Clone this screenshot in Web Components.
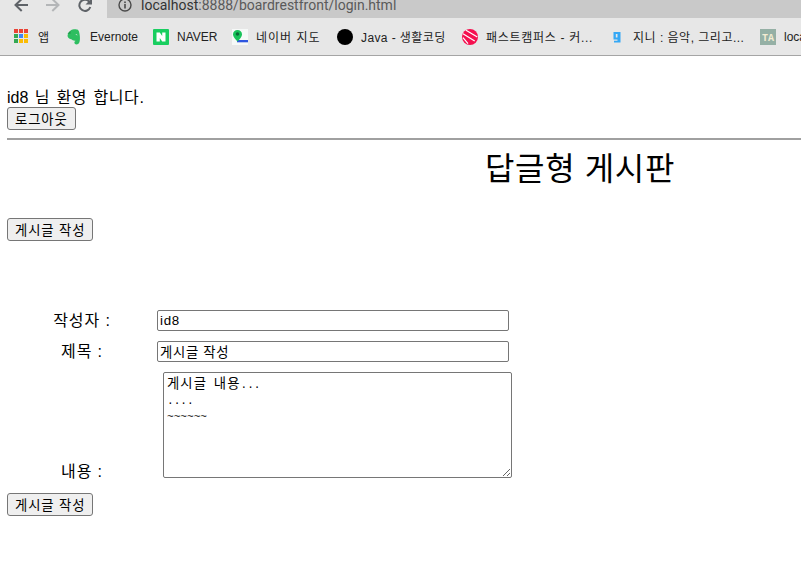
<!DOCTYPE html>
<html lang="ko">
<head>
<meta charset="utf-8">
<title>답글형 게시판</title>
<style>
html, body { margin: 0; height: 100%; overflow: hidden; background: #fff; }
body { font-family: "Liberation Sans", "Noto Sans CJK KR", sans-serif; }
</style>
</head>
<body>
<browser-toolbar url="localhost:8888/boardrestfront/login.html"></browser-toolbar>
<bookmark-bar>
	<bookmark-item label="앱" width="52"><svg viewBox="0 0 16 16" width="16" height="16"><rect x="0" y="0" width="4" height="4" fill="#ea4335"/><rect x="5" y="0" width="4" height="4" fill="#ea4335"/><rect x="10" y="0" width="4" height="4" fill="#ea4335"/><rect x="0" y="5" width="4" height="4" fill="#34a853"/><rect x="5" y="5" width="4" height="4" fill="#4285f4"/><rect x="10" y="5" width="4" height="4" fill="#fbbc05"/><rect x="0" y="10" width="4" height="4" fill="#34a853"/><rect x="5" y="10" width="4" height="4" fill="#fbbc05"/><rect x="10" y="10" width="4" height="4" fill="#fbbc05"/></svg></bookmark-item>
	<bookmark-item label="Evernote" width="87"><svg viewBox="0 0 16 16" width="16" height="16"><path d="M2 4.500 5 1.200C6.500.2 10.500 0 12 1c1 .7 1.300 2.500 1.700 5 .4 3 .3 5.500-.4 7.500-.6 1.800-3 2.500-4.300 1.500-1.100-.9-.8-2.800.9-2.900-1.200-.5-3.100-.3-4.100-1.500C3.900 9.700 2 9.500 1.500 7z" fill="#2dbe60"/><path d="M1.500 4.800h3V1.600z" fill="#1f9a4b"/><path d="M9.500 5.500c1-.4 1.800 0 2 .9-.8-.2-1.400-.3-2-.9z" fill="#e6e6e6"/></svg></bookmark-item>
	<bookmark-item label="NAVER" width="79"><svg viewBox="0 0 16 16" width="16" height="16"><rect width="16" height="16" rx="1" fill="#19ce60"/><path d="M3.500 3.500h3.300l2.400 3.500V3.500h3.300v9H9.200L6.800 9v3.500H3.500z" fill="#fff"/></svg></bookmark-item>
	<bookmark-item label="네이버 지도" width="105" spacing="1"><svg viewBox="0 0 16 16" width="16" height="16"><rect width="16" height="16" fill="#f6f9f8"/><rect x="5" y="11" width="11" height="2" fill="#2f56e0"/><rect x="5" y="13" width="11" height="1" fill="#b9c7f0"/><path d="M5.500 1C3 1 1 2.800 1 5.200c0 3 4.500 7.300 4.500 7.300S10 8.200 10 5.200C10 2.800 8 1 5.500 1z" fill="#19c35a"/><circle cx="5.500" cy="5" r="1.800" fill="#0b6b38"/></svg></bookmark-item>
	<bookmark-item label="Java - 생활코딩" width="125" spacing=".4"><svg viewBox="0 0 16 16" width="16" height="16"><circle cx="8" cy="8" r="8" fill="#000"/></svg></bookmark-item>
	<bookmark-item label="패스트캠퍼스 - 커..." width="147" spacing=".7"><svg viewBox="0 0 16 16" width="16" height="16"><circle cx="8" cy="8" r="8" fill="#f5104f"/><path d="M4 1.300 15.300 8M1 4.700 12.700 12M1 8.700l5 6" stroke="#fff" stroke-width="1.200" fill="none"/></svg></bookmark-item>
	<bookmark-item label="지니 : 음악, 그리고..." width="151" spacing=".5"><svg viewBox="0 0 16 16" width="16" height="16"><path d="M4.500 3h7v10.500H5V11.800h3.500v-1.300h-4zM6.800 5v3.500h1.700V5z" fill="#35a8f5"/></svg></bookmark-item>
	<bookmark-item label="localhost" width="60"><svg viewBox="0 0 16 16" width="16" height="16"><rect width="16" height="16" fill="#95b0a5"/><text x="8" y="12" text-anchor="middle" font-family="Liberation Mono" font-weight="700" font-size="10" fill="#f3ecd2">TA</text></svg></bookmark-item>
</bookmark-bar>
<board-page>
	<welcome-box name="id8"></welcome-box>
	<board-title>답글형 게시판</board-title>
	<write-form author="id8" subject="게시글 작성"></write-form>
</board-page>

<script>
class BrowserToolbar extends HTMLElement {
	constructor() {
		super();
		this.attachShadow({ mode: "open" });
		this.shadowRoot.innerHTML = `<style>
:host { display: block; height: 18px; overflow: hidden; background: #e7e7e7; }
#row { display: flex; align-items: center; height: 36px; margin-top: -13px; padding-left: 14px; }
svg { display: block; flex: none; }
#nav { display: flex; gap: 18px; }
#pill {
	flex: 1;
	height: 62px;
	margin: 0 -40px 0 15px;
	padding-left: 11px;
	display: flex;
	align-items: center;
	gap: 9px;
	background: #c9c9c9;
	border-radius: 16px;
	font: 14px "Roboto", "Liberation Sans", sans-serif;
	color: #5a5a5a;
}
#pill b { font-weight: 400; color: #333; }
</style>
<div id="row">
	<div id="nav">
		<svg viewBox="0 0 14 14" width="14" height="14"><path d="M14 7H2M7.700 1 1.500 7l6.200 6" fill="none" stroke="#5f6368" stroke-width="2"/></svg>
		<svg viewBox="0 0 14 14" width="14" height="14"><path d="M0 7h12M6.300 1l6.200 6-6.200 6" fill="none" stroke="#b4b6b8" stroke-width="2"/></svg>
		<svg viewBox="0 0 14 14" width="14" height="14"><path d="M12.300 9a5.600 5.600 0 1 1-1.200-5.500L13 5.500" fill="none" stroke="#5f6368" stroke-width="2"/><path d="M14 0v6.500H7.500z" fill="#5f6368"/></svg>
	</div>
	<div id="pill">
		<svg viewBox="0 0 14 14" width="14" height="14"><circle cx="7" cy="7" r="6" fill="none" stroke="#4a4a4a" stroke-width="1.400"/><rect x="6.200" y="6" width="1.600" height="4.500" fill="#4a4a4a"/><rect x="6.200" y="3.500" width="1.600" height="1.600" fill="#4a4a4a"/></svg>
		<span></span>
	</div>
</div>`;
	}
	connectedCallback() {
		let url = this.getAttribute("url");
		let cut = url.indexOf(":");
		this.shadowRoot.querySelector("#pill span").innerHTML = `<b>${url.slice(0, cut)}</b>${url.slice(cut)}`;
	}
}
customElements.define("browser-toolbar", BrowserToolbar);

class BookmarkBar extends HTMLElement {
	constructor() {
		super();
		this.attachShadow({ mode: "open" });
		this.shadowRoot.innerHTML = `<style>
:host {
	display: flex;
	align-items: center;
	height: 37px;
	padding-left: 14px;
	overflow: hidden;
	background: #e7e7e7;
	border-bottom: 1px solid #a5a5a5;
	font: 12px "Liberation Sans", "Noto Sans CJK KR", sans-serif;
	color: #222;
}
</style><slot></slot>`;
	}
}
customElements.define("bookmark-bar", BookmarkBar);

class BookmarkItem extends HTMLElement {
	constructor() {
		super();
		this.attachShadow({ mode: "open" });
		this.shadowRoot.innerHTML = `<style>
:host { display: flex; align-items: center; flex: none; gap: 8px; white-space: nowrap; }
::slotted(svg) { display: block; flex: none; }
</style><slot></slot><span></span>`;
	}
	connectedCallback() {
		let label = this.shadowRoot.querySelector("span");
		label.textContent = this.getAttribute("label");
		label.style.letterSpacing = (this.getAttribute("spacing") || 0) + "px";
		this.style.width = this.getAttribute("width") + "px";
	}
}
customElements.define("bookmark-item", BookmarkItem);

class BoardPage extends HTMLElement {
	constructor() {
		super();
		this.attachShadow({ mode: "open" });
		this.shadowRoot.innerHTML = `<style>
:host {
	display: block;
	padding: 32px 0 0 7px;
	font-size: 16px;
	color: #000;
}
</style><slot></slot>`;
	}
}
customElements.define("board-page", BoardPage);

class PlainButton extends HTMLElement {
	constructor() {
		super();
		this.attachShadow({ mode: "open" });
		this.shadowRoot.innerHTML = `<style>
:host { display: block; }
button {
	display: block;
	height: 23px;
	padding: 0 7px;
	box-sizing: border-box;
	background: #efefef;
	border: 1px solid #767676;
	border-radius: 3px;
	font: 13.33px "Liberation Sans", "Noto Sans CJK KR", sans-serif;
	letter-spacing: .9px;
	color: #000;
}
</style><button><slot></slot></button>`;
	}
}
customElements.define("plain-button", PlainButton);

class WelcomeBox extends HTMLElement {
	constructor() {
		super();
		this.attachShadow({ mode: "open" });
		this.shadowRoot.innerHTML = `<style>
:host { display: block; }
p { margin: 0; height: 19px; line-height: 19px; }
#greet { margin-left: 2px; letter-spacing: .6px; word-spacing: 1.3px; }
hr { margin: 8px 0 0; height: 0; border: 0; border-top: 2px solid #a0a0a0; }
</style><p><span id="who"></span> <span id="greet">님 환영 합니다.</span></p><plain-button>로그아웃</plain-button><hr>`;
	}
	connectedCallback() {
		this.shadowRoot.querySelector("#who").textContent = this.getAttribute("name");
	}
}
customElements.define("welcome-box", WelcomeBox);

class BoardTitle extends HTMLElement {
	constructor() {
		super();
		this.attachShadow({ mode: "open" });
		this.shadowRoot.innerHTML = `<style>
:host { display: block; width: 1146px; margin-top: 11px; text-align: center; font-size: 32px; line-height: 37px; letter-spacing: .65px; white-space: nowrap; }
</style><slot></slot>`;
	}
}
customElements.define("board-title", BoardTitle);

class WriteForm extends HTMLElement {
	constructor() {
		super();
		this.attachShadow({ mode: "open" });
		this.shadowRoot.innerHTML = `<style>
:host { display: block; margin-top: 30px; }
#grid {
	display: grid;
	grid-template-columns: 150px max-content;
	row-gap: 10px;
	margin: 69px 0 15px;
}
label { text-align: center; align-self: center; line-height: 19px; letter-spacing: .9px; }
label.low { align-self: end; margin-bottom: -3px; }
input, #body {
	display: block;
	box-sizing: border-box;
	margin: 0;
	background: #fff;
	border: 1px solid #767676;
	border-radius: 2px;
	color: #000;
}
input { width: 352px; height: 21px; padding: 1px 2px; font: 13.33px "Liberation Sans", "Noto Sans CJK KR", sans-serif; letter-spacing: .7px; }
/* ascii in the shot is half the hangul width, a plain textarea can't mix two sizes */
#body {
	width: 349px;
	height: 106px;
	margin-left: 6px;
	padding: 2px 3px;
	overflow: auto;
	resize: both;
	white-space: pre;
	font: 11.1px/16px "Liberation Mono", monospace;
}
#body span { font: 13.33px/16px "Noto Sans CJK KR", sans-serif; letter-spacing: 1.1px; }
</style>
<plain-button>게시글 작성</plain-button>
<div id="grid">
	<label>작성자 :</label><input id="author">
	<label>제목 :</label><input id="subject">
	<label class="low">내용 :</label><div id="body" role="textbox" aria-multiline="true"><span>게시글</span> <span>내용</span>...
....
~~~~~~</div>
</div>
<plain-button>게시글 작성</plain-button>`;
	}
	connectedCallback() {
		this.shadowRoot.querySelector("#author").setAttribute("value", this.getAttribute("author"));
		this.shadowRoot.querySelector("#subject").setAttribute("value", this.getAttribute("subject"));
	}
}
customElements.define("write-form", WriteForm);
</script>
</body>
</html>
